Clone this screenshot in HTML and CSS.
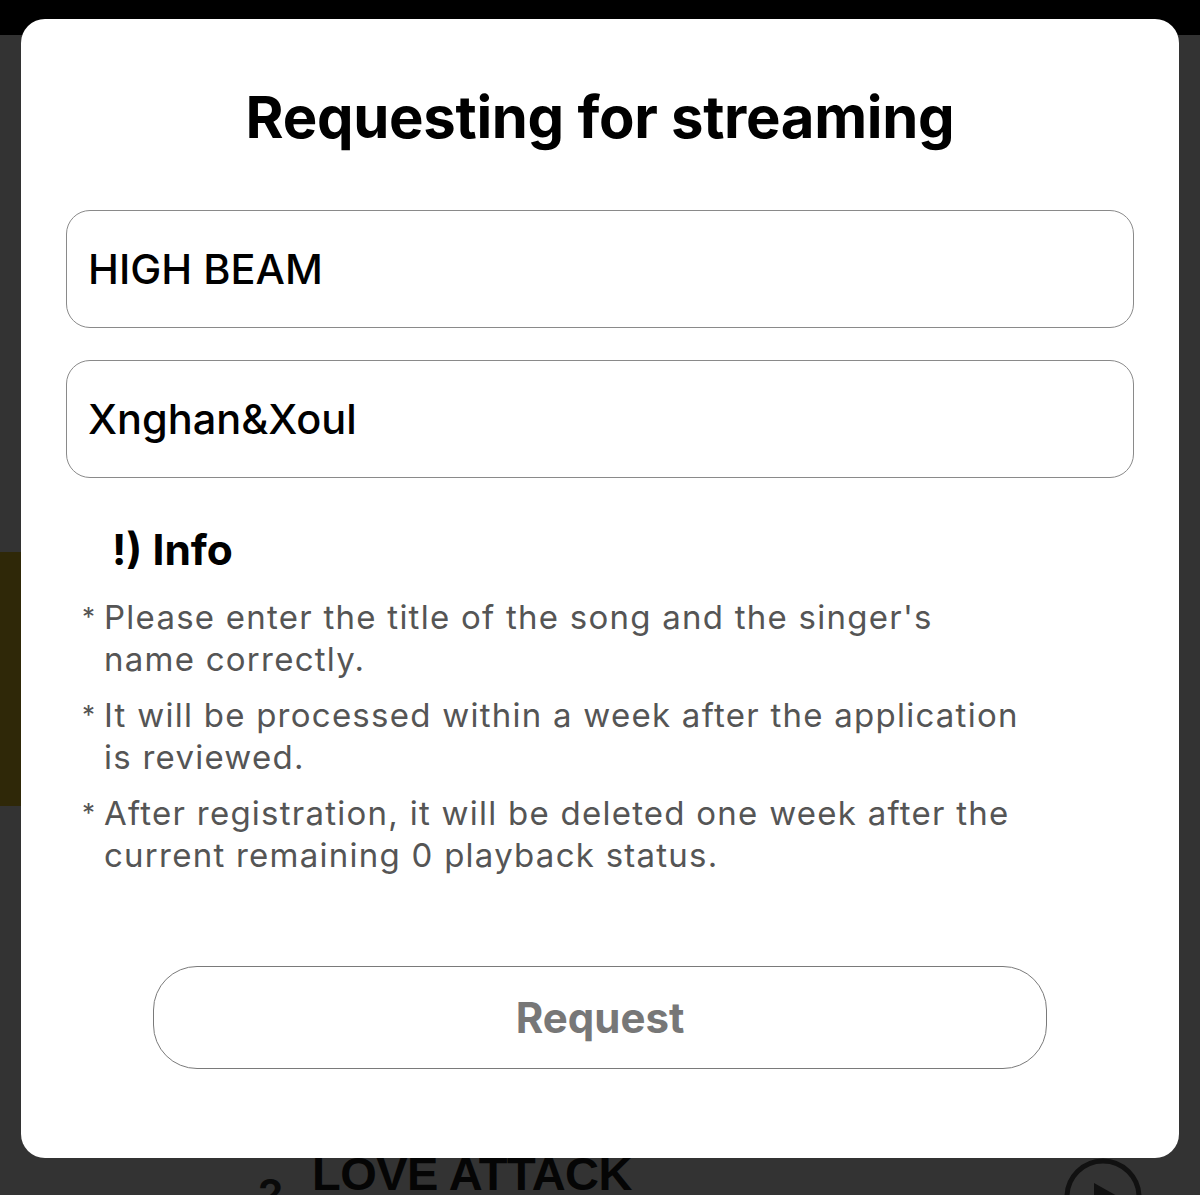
FILE: index.html
```html
<!DOCTYPE html>
<html>
<head>
<meta charset="utf-8">
<link rel="stylesheet" href="styles.css">
</head>
<body>
<div class="page">
  <div class="topbar"></div>
  <div class="banner"></div>
  <div class="song-row">
    <span class="rank">2</span>
    <span class="song-title">LOVE ATTACK</span>
    <span class="play-btn">
      <svg width="80" height="80" viewBox="0 0 80 80"><circle cx="40" cy="40" r="36" fill="none" stroke="#111" stroke-width="5"/><path d="M31 26 L56 40 L31 54 Z" fill="#111"/></svg>
    </span>
  </div>
</div>
<div class="modal">
  <h1 class="modal-title">Requesting for streaming</h1>
  <div class="field">HIGH BEAM</div>
  <div class="field">Xnghan&amp;Xoul</div>
  <div class="info">
    <h2 class="info-title">!) Info</h2>
    <ul class="info-list">
      <li><span class="star">*</span><span>Please enter the title of the song and the singer's name correctly.</span></li>
      <li><span class="star">*</span><span>It will be processed within a week after the application is reviewed.</span></li>
      <li><span class="star">*</span><span>After registration, it will be deleted one week after the current remaining 0 playback status.</span></li>
    </ul>
  </div>
  <div class="btn-wrap"><button class="request-btn">Request</button></div>
</div>
</body>
</html>
```
FILE: styles.css
```css
html, body {
  margin: 0;
  padding: 0;
}
body {
  width: 1200px;
  height: 1195px;
  overflow: hidden;
  background: #333333;
  font-family: Inter, "Noto Sans", sans-serif;
  position: relative;
}
.page {
  display: flex;
  flex-direction: column;
  height: 1195px;
}
.topbar {
  height: 35px;
  background: #000;
}
.banner {
  margin-top: 517px;
  height: 254px;
  width: 30px;
  background: #2f2808;
}
.song-row {
  margin-top: auto;
  height: 50px;
  display: flex;
  align-items: flex-start;
  position: relative;
}
.rank {
  font-size: 40px;
  font-weight: 700;
  color: #0a0a0a;
  margin-left: 258px;
  margin-top: 29px;
  width: 54px;
  line-height: 1;
}
.song-title {
  font-size: 47px;
  font-weight: 800;
  color: #050505;
  line-height: 1;
  margin-top: 5px;
  font-family: "Liberation Sans", Arial, sans-serif;
  letter-spacing: -0.5px;
}
.play-btn {
  margin-left: auto;
  margin-right: 57px;
  margin-top: 12px;
}
.modal {
  position: absolute;
  left: 21px;
  top: 19px;
  width: 1158px;
  height: 1139px;
  background: #fff;
  border-radius: 24px;
  box-sizing: border-box;
  padding: 0 45px;
  display: flex;
  flex-direction: column;
}
.modal-title {
  margin: 78px 0 0;
  text-align: center;
  font-size: 58px;
  font-weight: 700;
  line-height: 40px;
  color: #000;
  letter-spacing: -0.3px;
}
.field {
  margin-top: 73px;
  height: 118px;
  border: 1.5px solid #8a8a8a;
  border-radius: 24px;
  box-sizing: border-box;
  display: flex;
  align-items: center;
  padding-left: 21px;
  font-size: 41.5px;
  font-weight: 500;
  color: #000;
}
.field + .field {
  margin-top: 32px;
}
.info {
  margin-top: 48px;
}
.info-title {
  margin: 0 0 0 46px;
  font-size: 42.5px;
  font-weight: 700;
  color: #000;
  line-height: 48px;
}
.info-list {
  list-style: none;
  margin: 22px 0 0;
  padding: 0 0 0 16px;
  display: flex;
  flex-direction: column;
  gap: 14px;
}
.info-list li {
  display: flex;
  font-size: 33px;
  letter-spacing: 1.25px;
  line-height: 42px;
  color: #555;
  width: 945px;
}
.star {
  width: 22px;
  flex: none;
  font-size: 26px;
  letter-spacing: 0;
}
.btn-wrap {
  margin-top: auto;
  margin-bottom: 89px;
  display: flex;
  justify-content: center;
}
.request-btn {
  width: 894px;
  height: 103px;
  border: 1.5px solid #7a7a7a;
  border-radius: 44px;
  background: #fff;
  font-family: Inter, "Noto Sans", sans-serif;
  font-size: 42px;
  font-weight: 700;
  color: #777;
}
```
